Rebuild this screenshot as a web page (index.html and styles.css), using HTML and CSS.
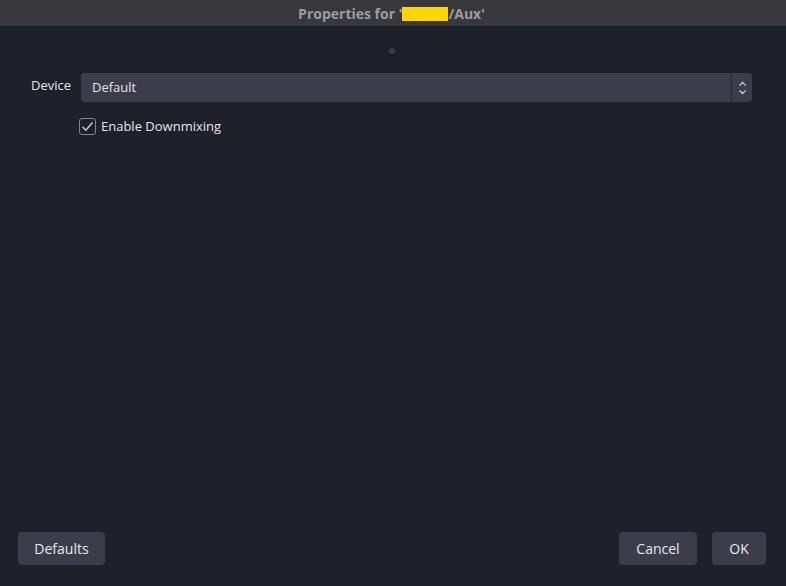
FILE: index.html
```html
<!DOCTYPE html>
<html lang="en">
<head>
  <meta charset="UTF-8" />
  <title>Properties for Aux</title>
  <link rel="stylesheet" href="styles.css">
</head>
<body>
  <div class="window">
    <div class="titlebar">
      <span>Properties for '</span><span class="redacted"></span><span>/Aux'</span>
    </div>

    <div class="content">
      <div class="dot"></div>

      <div class="form-row">
        <label class="form-label">Device</label>
        <div class="select">
          <div class="select-value">Default</div>
          <div class="select-spin">
            <svg width="9" height="14" viewBox="0 0 9 14">
              <path d="M1.5 4.5 L4.5 1.5 L7.5 4.5" fill="none" stroke="#c9cad0" stroke-width="1.3"/>
              <path d="M1.5 9.5 L4.5 12.5 L7.5 9.5" fill="none" stroke="#c9cad0" stroke-width="1.3"/>
            </svg>
          </div>
        </div>
      </div>

      <div class="check-row">
        <div class="checkbox">
          <svg width="13" height="11" viewBox="0 0 13 11">
            <path d="M1.5 5.8 L4.8 9.2 L11.5 1.5" fill="none" stroke="#c9cad0" stroke-width="1.5"/>
          </svg>
        </div>
        <span>Enable Downmixing</span>
      </div>

      <div class="spacer"></div>

      <div class="footer">
        <button class="btn btn-defaults">Defaults</button>
        <div class="footer-right">
          <button class="btn btn-cancel">Cancel</button>
          <button class="btn btn-ok">OK</button>
        </div>
      </div>
    </div>
  </div>
</body>
</html>
```

FILE: styles.css
```css
* {
  margin: 0;
  padding: 0;
  box-sizing: border-box;
}

body {
  font-family: "Open Sans", "Noto Sans", sans-serif;
  background: #1f212a;
  color: #e4e5e9;
  overflow: hidden;
}

.window {
  width: 786px;
  height: 586px;
  display: flex;
  flex-direction: column;
}

.titlebar {
  height: 27px;
  background: #38373c;
  border-bottom: 1px solid #19191d;
  display: flex;
  justify-content: center;
  align-items: center;
  font-size: 14px;
  font-weight: bold;
  color: #9d9ca1;
  padding-right: 3px;
}

.redacted {
  display: inline-block;
  width: 46px;
  height: 14px;
  background: #ffd600;
  margin-top: 1px;
}

.content {
  flex: 1;
  display: flex;
  flex-direction: column;
}

.dot {
  width: 6px;
  height: 6px;
  border-radius: 50%;
  background: #3b3e4a;
  margin: 21px 0 0 389px;
}

.form-row {
  display: flex;
  align-items: center;
  margin-top: 19px;
  height: 29px;
}

.form-label {
  width: 71px;
  text-align: right;
  font-size: 13px;
  color: #e4e5e9;
  margin-right: 10px;
  margin-top: -6px;
}

.select {
  width: 671px;
  height: 29px;
  background: #3b3e4a;
  border-radius: 4px;
  display: flex;
}

.select-value {
  flex: 1;
  padding-left: 11px;
  font-size: 13px;
  line-height: 29px;
}

.select-spin {
  width: 21px;
  border-left: 1px solid #272933;
  display: flex;
  align-items: center;
  justify-content: center;
}

.check-row {
  display: flex;
  align-items: center;
  margin: 15px 0 0 79px;
  font-size: 13px;
}

.checkbox {
  width: 17px;
  height: 17px;
  border: 1px solid #85868c;
  border-radius: 3px;
  display: flex;
  align-items: center;
  justify-content: center;
  margin-right: 5px;
}

.spacer {
  flex: 1;
}

.footer {
  display: flex;
  justify-content: space-between;
  padding: 0 20px 21px 18px;
}

.footer-right {
  display: flex;
  gap: 15px;
}

.btn {
  height: 33px;
  border: none;
  border-radius: 4px;
  background: #3b3e4a;
  color: #e8e9ec;
  font-family: "Open Sans", "Noto Sans", sans-serif;
  font-size: 14px;
}

.btn-defaults {
  width: 87px;
}

.btn-cancel {
  width: 78px;
}

.btn-ok {
  width: 54px;
}
```
